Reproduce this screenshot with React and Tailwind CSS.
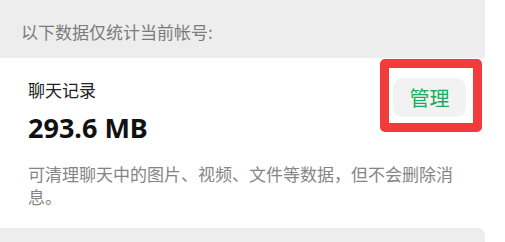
export default function App() {
  const cjk = { fontFamily: '"Noto Sans CJK SC", "Noto Sans", sans-serif' };
  return (
    <div
      className="relative w-[505px] h-[242px] overflow-hidden bg-white"
      style={{ fontFamily: '"Noto Sans", "Noto Sans CJK SC", sans-serif' }}
    >
      <div className="w-[485px]">
        <div
          className="h-[58px] bg-[#ededed] pl-[21px] pt-[20px] text-[17px] leading-[24px] text-[#7a7a7a]"
          style={cjk}
        >
          以下数据仅统计当前帐号:
        </div>

        <div className="bg-white pl-[28px] pr-[19px] pt-[20px] h-[170px]">
          <div className="flex justify-between items-start">
            <div>
              <div className="text-[17px] leading-[24px] text-[#222]" style={cjk}>
                聊天记录
              </div>
              <div className="mt-[9px] text-[27px] leading-[34px] font-bold text-[#111]">293.6 MB</div>
            </div>
            <button
              className="w-[73px] h-[39px] rounded-[10px] bg-[#f2f2f2] text-[20px] text-[#1aad5a] flex items-center justify-center"
              style={cjk}
            >
              管理
            </button>
          </div>
          <p
            className="mt-[17px] w-[438px] text-[17px] leading-[23px] text-[#858585]"
            style={cjk}
          >
            可清理聊天中的图片、视频、文件等数据，但不会删除消
            <br />
            息。
          </p>
        </div>

        <div className="h-[14px] bg-[#ededed] rounded-tr-[8px]" />
      </div>

      <div className="absolute left-[380px] top-[59px] w-[102px] h-[73px] border-[9px] border-[#f23b3b] rounded-[5px]" />
    </div>
  );
}
